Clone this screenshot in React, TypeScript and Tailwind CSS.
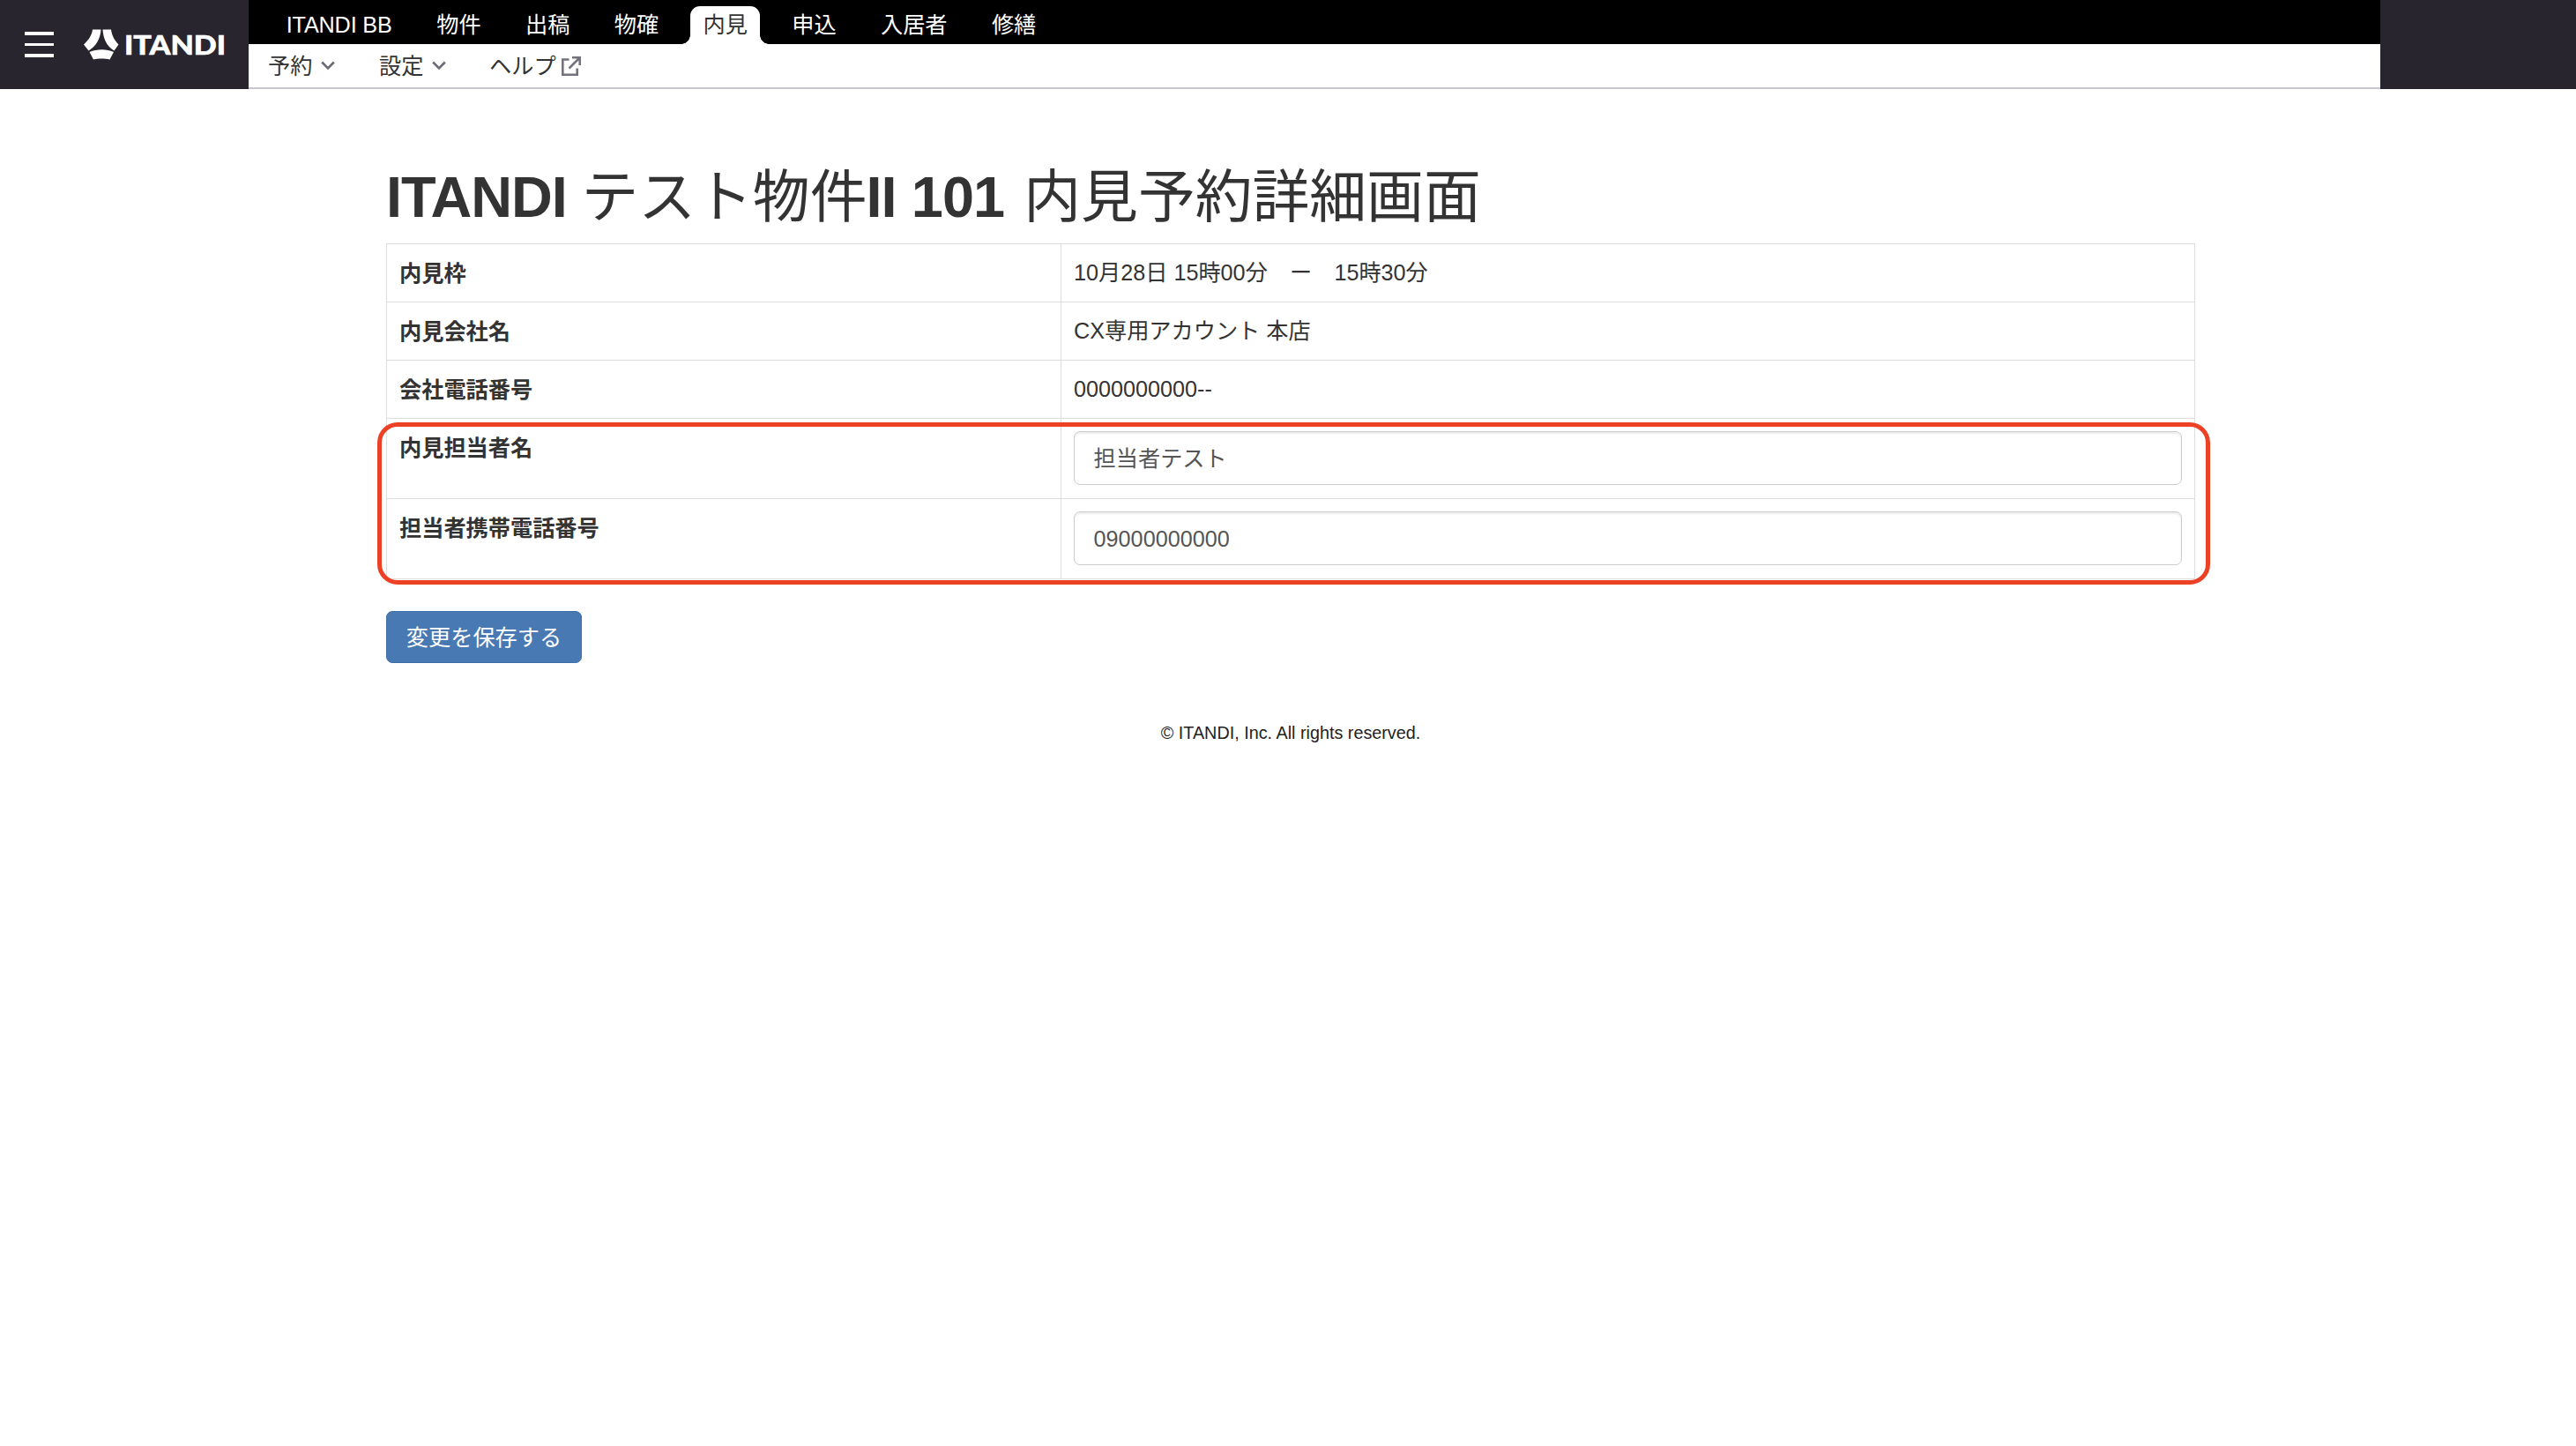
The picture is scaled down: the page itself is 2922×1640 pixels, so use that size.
import React, { useState } from 'react';

const services = ['ITANDI BB', '物件', '出稿', '物確', '内見', '申込', '入居者', '修繕'];

const details = [
  { label: '内見枠', value: '10月28日 15時00分　ー　15時30分' },
  { label: '内見会社名', value: 'CX専用アカウント 本店' },
  { label: '会社電話番号', value: '0000000000--' },
];

function Logo() {
  return (
    <svg width="166" height="48" viewBox="0 -6 166 48" fill="#fff" className="shrink-0">
      <path d="M10 .500H19.500C19 11 13.500 20 5.500 24.500L0 17.500C5 12.500 9 8 10 .500Z" />
      <path d="M21.500 .500H31C32 8 35 12.500 39.500 17.500L34.500 24.500C26.500 20 22 11 21.500 .500Z" />
      <path d="M6.500 26C15 22.300 26 22.300 34 26L29.500 34.500C24 33.200 16 33.200 11 34.500Z" />
      <text x="46" y="29.300" textLength="115" lengthAdjust="spacingAndGlyphs" fontSize="31" stroke="#fff" strokeWidth=".6" className="font-['Lato'] font-black">
        ITANDI
      </text>
    </svg>
  );
}

function Chevron() {
  return (
    <svg width="16" height="11" viewBox="0 0 16 11" fill="none" stroke="#6b6b76" strokeWidth="2.6">
      <path d="M1.200 1.500L8 8.500L14.800 1.500" />
    </svg>
  );
}

function ExternalLink() {
  return (
    <svg width="24" height="24" viewBox="0 0 24 24" fill="none" stroke="#73737d" strokeWidth="2.600">
      <path d="M9.500 4.500H2.300V21.700H18.700V14.500" />
      <path d="M13 2.300H21.700V11M21.500 2.500L9.500 14.500" />
    </svg>
  );
}

function ServiceTab({ name, active }: { name: string; active: boolean }) {
  if (!active) {
    return (
      <a className="mx-[10.8px] mt-[7px] h-[43px] px-[14.4px] leading-[42px] text-white first:mr-[11px] first:tracking-[-0.15px]">
        {name}
      </a>
    );
  }
  return (
    <a className="relative mx-[10.8px] mt-[7px] h-[43px] rounded-t-[11px] bg-white px-[14.4px] leading-[42px] text-[#333]">
      <span className="absolute bottom-0 -left-[10px] size-[10px] bg-[radial-gradient(circle_at_0_0,#000_9.5px,#fff_10px)]" />
      {name}
      <span className="absolute bottom-0 -right-[10px] size-[10px] bg-[radial-gradient(circle_at_100%_0,#000_9.5px,#fff_10px)]" />
    </a>
  );
}

function Header() {
  return (
    <header className="flex h-[101px] bg-[#28252f]">
      <div className="flex w-[282px] shrink-0 items-center pl-7">
        <button className="mr-[34px] flex w-[33px] flex-col gap-[9px]">
          <span className="h-[3.5px] bg-white" />
          <span className="h-[3.5px] bg-white" />
          <span className="h-[3.5px] bg-white" />
        </button>
        <Logo />
      </div>
      <div className="flex w-[2418px] flex-col border-b-2 border-[#c8c7cd] bg-white">
        <nav className="flex h-[50px] bg-black pl-[17.5px]">
          {services.map((name) => (
            <ServiceTab key={name} name={name} active={name === '内見'} />
          ))}
        </nav>
        <nav className="flex h-[49px] items-center pl-[22px] text-[#333]">
          <a className="flex w-[126px] items-center gap-[10px]">予約 <Chevron /></a>
          <a className="flex w-[125px] items-center gap-[10px]">設定 <Chevron /></a>
          <a className="flex items-center gap-[5px]">ヘルプ <ExternalLink /></a>
        </nav>
      </div>
    </header>
  );
}

const thClass = 'border border-[#ddd] px-[14px] pt-[15px] text-left align-top font-bold';
const tdClass = 'border border-[#ddd] px-[14px] pt-[14px] align-top';
const inputClass =
  'block h-[61px] w-full rounded-[7px] border border-[#ccc] bg-white px-[21.6px] text-[#555] shadow-[inset_0_2px_2px_rgba(0,0,0,0.075)] outline-none';

export default function App() {
  const [staff, setStaff] = useState('担当者テスト');
  const [phone, setPhone] = useState('09000000000');

  return (
    <div className="min-h-screen w-[2922px] bg-white font-['Liberation_Sans','Noto_Sans_CJK_JP',sans-serif] text-[25.2px] leading-[36px] text-[#333]">
      <Header />

      <main className="ml-[438px] w-[2052px] pt-[87px]">
        <h1 className="h-[88px] text-[64.8px] leading-[71px] font-normal whitespace-nowrap">
          <span className="font-bold tracking-[-1.1px]">ITANDI </span>テスト物件
          <span className="mr-[5px] -ml-px font-bold tracking-[-0.9px]">II 101 </span>内見予約詳細画面
        </h1>

        <div className="relative">
          <table className="w-full table-fixed border-collapse">
            <colgroup>
              <col className="w-[765px]" />
              <col />
            </colgroup>
            <tbody>
              {details.map((row) => (
                <tr key={row.label} className="h-[66px]">
                  <th className={thClass}>{row.label}</th>
                  <td className={tdClass}>{row.value}</td>
                </tr>
              ))}
              <tr className="h-[91px]">
                <th className={thClass}>内見担当者名</th>
                <td className={tdClass}>
                  <input className={`${inputClass} pb-[3px]`} value={staff} onChange={(e) => setStaff(e.target.value)} />
                </td>
              </tr>
              <tr className="h-[91px]">
                <th className={thClass}>担当者携帯電話番号</th>
                <td className={tdClass}>
                  <input className={`${inputClass} pt-px`} value={phone} onChange={(e) => setPhone(e.target.value)} />
                </td>
              </tr>
            </tbody>
          </table>
          {/* Highlight around the editable rows */}
          <div className="pointer-events-none absolute top-[203px] -left-[10px] h-[184px] w-[2079px] rounded-[23px] border-[5px] border-[#ec4125]" />
        </div>

        <button className="mt-9 block h-[59px] w-[222px] rounded-[7px] border border-[#3f6fa8] bg-[#4879b2] text-center text-white">
          変更を保存する
        </button>

        <footer className="mt-[61px] text-center text-[19.8px] text-[#222]">© ITANDI, Inc. All rights reserved.</footer>
      </main>
    </div>
  );
}
